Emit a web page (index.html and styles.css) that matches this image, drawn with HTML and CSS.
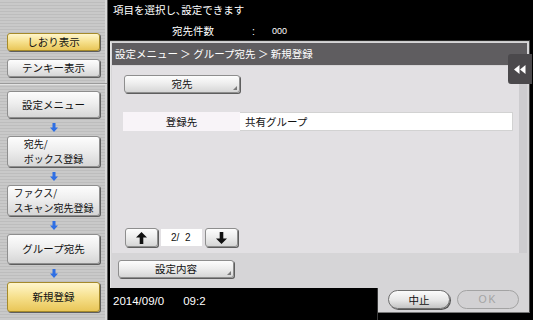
FILE: index.html
```html
<!DOCTYPE html>
<html lang="ja">
<head>
<meta charset="utf-8">
<link rel="stylesheet" href="styles.css">
</head>
<body>
<div class="screen">
  <aside class="sidebar">
    <div class="btn side yellow short">しおり表示</div>
    <div class="btn side short gap8">テンキー表示</div>
    <div class="sep"></div>
    <div class="btn side h27">設定メニュー</div>
    <div class="down"><svg width="8" height="9" viewBox="0 0 8 9"><path d="M2.5 0h3v4.5H8L4 9 0 4.5h2.5z" fill="#2f6fe4"/></svg></div>
    <div class="btn side h31"><span class="lines">宛先/<br>ボックス登録</span></div>
    <div class="down"><svg width="8" height="9" viewBox="0 0 8 9"><path d="M2.5 0h3v4.5H8L4 9 0 4.5h2.5z" fill="#2f6fe4"/></svg></div>
    <div class="btn side h31"><span class="lines">ファクス/<br>スキャン宛先登録</span></div>
    <div class="down"><svg width="8" height="9" viewBox="0 0 8 9"><path d="M2.5 0h3v4.5H8L4 9 0 4.5h2.5z" fill="#2f6fe4"/></svg></div>
    <div class="btn side h30">グループ宛先</div>
    <div class="down"><svg width="8" height="9" viewBox="0 0 8 9"><path d="M2.5 0h3v4.5H8L4 9 0 4.5h2.5z" fill="#2f6fe4"/></svg></div>
    <div class="btn side h30 yellow">新規登録</div>
  </aside>
  <main class="main">
    <header class="topbar">
      <div class="msg">項目を選択し､設定できます</div>
      <div class="count"><span class="c-label">宛先件数</span><span class="c-colon">:</span><span class="c-num">000</span></div>
    </header>
    <section class="panel">
      <div class="crumb">設定メニュー ＞ グループ宛先 ＞ 新規登録</div>
      <div class="body">
        <div class="content">
          <div class="btn drop dest">宛先</div>
          <div class="row">
            <div class="label">登録先</div>
            <div class="value">共有グループ</div>
          </div>
          <div class="pager">
            <div class="btn pg-btn"><svg width="11" height="12" viewBox="0 0 11 12"><path d="M5.5 0L11 5.5H7.3V12H3.7V5.5H0z" fill="#111"/></svg></div>
            <div class="pg-num">2/&nbsp;&nbsp;2</div>
            <div class="btn pg-btn"><svg width="11" height="12" viewBox="0 0 11 12"><path d="M5.5 12L11 6.5H7.3V0H3.7V6.5H0z" fill="#111"/></svg></div>
          </div>
        </div>
        <div class="strip"></div>
      </div>
      <div class="lower">
        <div class="btn drop settings">設定内容</div>
      </div>
      <div class="tab"><svg width="12" height="9" viewBox="0 0 12 9"><path d="M0 4.5L5.5 0v9zM6 4.5L11.5 0v9z" fill="#fff"/></svg></div>
    </section>
    <footer class="bottom">
      <div class="datetime"><span>2014/09/0</span><span class="time">09:2</span></div>
      <div class="actions">
        <div class="pill">中止</div>
        <div class="pill off">OK</div>
      </div>
    </footer>
  </main>
</div>
</body>
</html>
```

FILE: styles.css
```css
* { box-sizing: border-box; }
html, body { margin: 0; padding: 0; }
body {
  width: 533px;
  height: 320px;
  overflow: hidden;
  background: #000;
  font-family: "Noto Sans CJK JP", "Noto Sans", sans-serif;
  font-size: 10.5px;
  color: #111;
}
.screen {
  display: flex;
  width: 533px;
  height: 320px;
}

/* sidebar */
.sidebar {
  width: 108px;
  flex: none;
  display: flex;
  flex-direction: column;
  align-items: flex-start;
  padding-top: 33px;
  background: repeating-linear-gradient(180deg, #c9c9c9 0 2px, #bdbdbd 2px 3px);
  border-right: 1px solid #5a5a5a;
  box-shadow: inset -2px 0 0 #d8d8d8;
}
.btn {
  display: flex;
  align-items: center;
  justify-content: center;
  background: linear-gradient(180deg, #fdfdfd 0%, #eeeeee 45%, #d6d6d6 100%);
  border: 1px solid #8e8e8e;
  border-radius: 3px;
  box-shadow: 1px 1px 0 #5e5e5e;
  color: #111;
  line-height: 12px;
  white-space: nowrap;
}
.side {
  width: 93px;
  margin-left: 7px;
}
.short { height: 18px; }
.gap8 { margin-top: 8px; }
.h27 { height: 27px; }
.h31 { height: 31px; }
.h30 { height: 30px; }
.yellow {
  background: linear-gradient(180deg, #fff6cc 0%, #f6e08c 50%, #e9c658 100%);
  border-color: #a58a2a;
}
.lines {
  display: inline-block;
  text-align: left;
  font-size: 10px;
  line-height: 14.5px;
}
.sep {
  width: 107px;
  height: 2px;
  margin: 6px 0 6px;
  border-top: 1px solid #9a9a9a;
  border-bottom: 1px solid #e2e2e2;
}
.down {
  width: 93px;
  margin-left: 7px;
  height: 18px;
  display: flex;
  align-items: center;
  justify-content: center;
}

/* main */
.main {
  flex: 1;
  display: flex;
  flex-direction: column;
  min-width: 0;
}
.topbar {
  height: 40px;
  flex: none;
  color: #fff;
  padding-left: 5px;
}
.msg {
  height: 20px;
  line-height: 20px;
}
.count {
  height: 20px;
  line-height: 20px;
  display: flex;
  padding-left: 59px;
  padding-top: 1px;
}
.c-label { width: 80px; }
.c-colon { width: 20px; font-family: "Liberation Sans", sans-serif; }
.c-num { font-family: "Liberation Sans", sans-serif; font-size: 9px; }

.panel {
  position: relative;
  flex: 1;
  margin: 0 3px 0 2px;
  background: #d6d5d7;
  border-top: 1px solid #2a2a2a;
  box-shadow: inset 0 1px 0 #c9c9c9, inset 1px 0 0 #e6e6e6;
  padding: 2px 2px 0 2px;
  border-right: 1px solid #4a4a4a;
  display: flex;
  flex-direction: column;
}
.crumb {
  height: 22px;
  line-height: 22px;
  background: #5f5d60;
  color: #fff;
  padding-left: 3px;
  flex: none;
}
.body {
  flex: 1;
  display: flex;
  margin-top: 1px;
}
.content {
  flex: 1;
  background: #e2e0e3;
  padding: 9px 6px 6px 11px;
  display: flex;
  flex-direction: column;
}
.strip {
  width: 8px;
  background: #cdcccf;
}
.drop { position: relative; }
.drop::after {
  content: "";
  position: absolute;
  right: 2px;
  bottom: 2px;
  border-left: 4px solid transparent;
  border-bottom: 4px solid #7a7a7a;
}
.dest {
  width: 116px;
  height: 18px;
  margin-left: 1px;
}
.row {
  display: flex;
  height: 19px;
  margin-top: 19px;
}
.label {
  width: 117px;
  background: #f8f4f8;
  display: flex;
  align-items: center;
  justify-content: center;
}
.value {
  flex: 1;
  background: #fff;
  border: 1px solid #d2d2d2;
  border-left: none;
  display: flex;
  align-items: center;
  padding-left: 5px;
}
.pager {
  margin-top: auto;
  display: flex;
  align-items: center;
  gap: 3px;
  margin-left: 2px;
}
.pg-btn {
  width: 33px;
  height: 19px;
}
.pg-num {
  width: 41px;
  height: 17px;
  background: #fff;
  font-family: "Liberation Sans", sans-serif;
  font-size: 10px;
  line-height: 17px;
  padding-left: 10px;
}
.lower {
  height: 35px;
  flex: none;
  padding: 7px 0 0 6px;
}
.settings {
  width: 116px;
  height: 18px;
}
.tab {
  position: absolute;
  left: 398px;
  top: 13px;
  width: 24px;
  height: 30px;
  background: #4b494c;
  border-radius: 3px 0 0 3px;
  display: flex;
  align-items: center;
  justify-content: center;
}

/* bottom */
.bottom {
  height: 32px;
  flex: none;
  display: flex;
}
.datetime {
  flex: 1;
  color: #fff;
  font-family: "Liberation Sans", sans-serif;
  font-size: 11.5px;
  padding: 7px 0 0 5px;
  display: flex;
  gap: 19px;
  border-right: 1px solid #3a3a3a;
}
.actions {
  width: 152px;
  height: 25px;
  margin-right: 3px;
  background: #d6d5d7;
  border-right: 1px solid #4a4a4a;
  border-bottom: 1px solid #777;
  display: flex;
  align-items: center;
  gap: 7px;
  padding: 0 0 2px 10px;
}
.pill {
  width: 62px;
  height: 19px;
  border-radius: 10px;
  border: 1px solid #6e6e6e;
  background: linear-gradient(180deg, #fbfbfb 0%, #e6e6e6 55%, #c4c4c4 100%);
  box-shadow: 1px 1px 0 #555;
  display: flex;
  align-items: center;
  justify-content: center;
}
.pill.off {
  background: #d2d1d3;
  border-color: #a3a3a3;
  box-shadow: none;
  color: #a4a4a4;
  font-family: "Liberation Sans", sans-serif;
  letter-spacing: 2px;
}
```
